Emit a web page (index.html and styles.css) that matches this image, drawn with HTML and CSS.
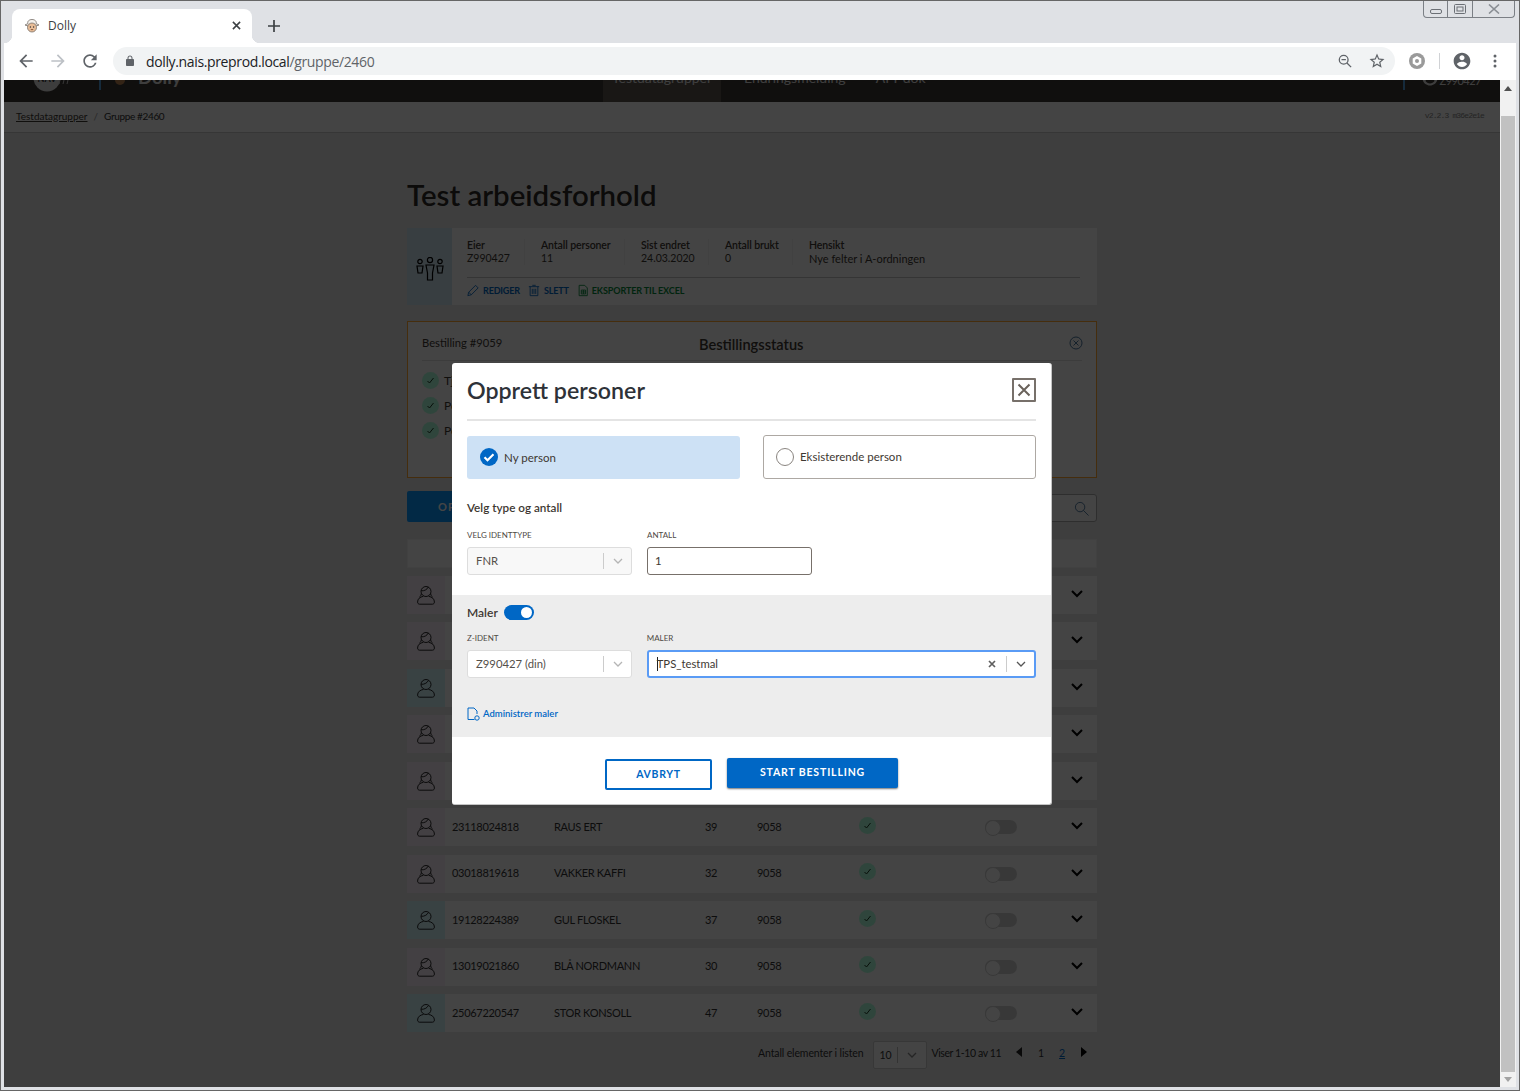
FILE: index.html
```html
<!DOCTYPE html>
<html lang="no">
<head>
<meta charset="utf-8">
<title>Dolly</title>
<link rel="stylesheet" href="styles.css">
</head>
<body>
<svg class="defs" width="0" height="0" aria-hidden="true">
  <symbol id="woman" viewBox="0 0 18 20"><g fill="none" stroke="currentColor" stroke-width=".9"><circle cx="9" cy="6.500" r="5"/><path d="M4.200 5.800c2.800.3 5.800-1 7.200-3.900M4.300 8.500c-.2 1.800-.8 2.800-1.800 3.500M13.700 8.500c.2 1.800.8 2.800 1.800 3.500M6.300 11.300C3 12 .6 13.800.6 17c0 1.300.8 2.200 2 2.200h12.800c1.200 0 2-.9 2-2.200 0-3.200-2.400-5-5.700-5.700"/></g></symbol>
  <symbol id="man" viewBox="0 0 18 20"><g fill="none" stroke="currentColor" stroke-width=".9"><circle cx="9" cy="6.500" r="5"/><path d="M4.200 6.300c2.800.2 5.600-1 7.200-3.700M6.500 11.400C3.200 12 .6 13.800.6 17c0 1.300.8 2.200 2 2.200h12.800c1.200 0 2-.9 2-2.200 0-3.200-2.600-5-5.900-5.600"/></g></symbol>
  <symbol id="ok" viewBox="0 0 17 17"><circle cx="8.500" cy="8.500" r="8.500" fill="#aeffdc"/><path d="M5.500 9l2 2 4-5" fill="none" stroke="#1a3a25" stroke-width="1"/></symbol>
  <symbol id="chev" viewBox="0 0 14 10"><path d="M2 2l5 5 5-5" fill="none" stroke="currentColor" stroke-width="2"/></symbol>
  <symbol id="thin-chev" viewBox="0 0 12 8"><path d="M2 2l4 4 4-4" fill="none" stroke="currentColor" stroke-width="1.300"/></symbol>
</svg>

<div class="window">
  <div class="tabstrip">
    <div class="tab">
      <svg class="favicon" viewBox="0 0 16 16"><path d="M4 5.500C3 3.500 5 1.500 8 1.500s5 2 4 4l3 1.500-3 1H4L1 7z" fill="#f4f1ec" stroke="#77706a" stroke-width=".8"/><circle cx="8" cy="9.500" r="4.500" fill="#e9bd97" stroke="#77706a" stroke-width=".8"/><circle cx="6.400" cy="9" r=".7" fill="#333"/><circle cx="9.600" cy="9" r=".7" fill="#333"/><path d="M6.800 11.600h2.400" stroke="#8b5a3c"/></svg>
      <span class="tab-title">Dolly</span>
      <svg class="tab-close" viewBox="0 0 10 10"><path d="M1 1l8 8M9 1l-8 8" stroke="#3c4043" stroke-width="1.700"/></svg>
    </div>
    <svg class="new-tab" viewBox="0 0 12 12"><path d="M6 0v12M0 6h12" stroke="#3c4043" stroke-width="1.700"/></svg>
    <div class="win-controls">
      <span class="win-btn win-min"><svg viewBox="0 0 12 6" width="12" height="6"><rect x=".5" y=".5" width="11" height="4" rx="1.500" fill="none" stroke="#6b6f75"/></svg></span>
      <span class="win-btn win-max"><svg viewBox="0 0 12 10" width="12" height="10"><rect x=".5" y=".5" width="11" height="9" rx="1" fill="none" stroke="#6b6f75"/><rect x="3" y="3" width="6" height="4" fill="none" stroke="#6b6f75"/></svg></span>
      <span class="win-btn win-close"><svg viewBox="0 0 12 10" width="12" height="10"><path d="M1 .5l10 9M11 .5l-10 9" stroke="#8a8e94" stroke-width="1.600" fill="none"/></svg></span>
    </div>
  </div>

  <div class="toolbar">
    <svg class="tb-icon back" viewBox="0 0 24 24"><path d="M20 11H7.830l5.590-5.590L12 4l-8 8 8 8 1.410-1.410L7.830 13H20v-2z"/></svg>
    <svg class="tb-icon forward" viewBox="0 0 24 24"><path d="M4 11h12.170l-5.590-5.590L12 4l8 8-8 8-1.410-1.410L16.170 13H4v-2z"/></svg>
    <svg class="tb-icon reload" viewBox="0 0 24 24"><path d="M17.650 6.350A7.958 7.958 0 0 0 12 4c-4.420 0-7.990 3.580-7.990 8s3.570 8 7.990 8c3.730 0 6.840-2.550 7.730-6h-2.080A5.990 5.990 0 0 1 12 18c-3.310 0-6-2.690-6-6s2.690-6 6-6c1.660 0 3.140.690 4.220 1.780L13 11h7V4l-2.350 2.350z"/></svg>
    <div class="omnibox">
      <svg class="lock" viewBox="0 0 24 24"><path d="M18 8h-1V6c0-2.760-2.240-5-5-5S7 3.240 7 6v2H6c-1.100 0-2 .9-2 2v10c0 1.100.9 2 2 2h12c1.100 0 2-.9 2-2V10c0-1.100-.9-2-2-2zM9 6c0-1.660 1.340-3 3-3s3 1.340 3 3v2H9V6z"/></svg>
      <span class="url"><span class="url-host">dolly.nais.preprod.local</span>/gruppe/2460</span>
      <svg class="omni-icon zoom-out" viewBox="0 0 16 16"><circle cx="6.500" cy="6.500" r="5" fill="none" stroke="#5f6368" stroke-width="1.500"/><path d="M10.200 10.200L15 15M4 6.500h5" stroke="#5f6368" stroke-width="1.500"/></svg>
      <svg class="omni-icon star" viewBox="0 0 24 24"><path d="M22 9.240l-7.190-.62L12 2 9.190 8.630 2 9.240l5.460 4.730L5.820 21 12 17.270 18.180 21l-1.630-7.030L22 9.240zM12 15.400l-3.760 2.270 1-4.280-3.320-2.880 4.380-.38L12 6.100l1.710 4.040 4.380.38-3.320 2.880 1 4.280L12 15.400z"/></svg>
    </div>
    <svg class="ext" viewBox="0 0 16 16"><circle cx="8" cy="8" r="8" fill="#9a9a9a"/><path d="M8 3l4.300 2.500v5L8 13l-4.300-2.500v-5z" fill="#fff"/><circle cx="8" cy="8" r="2" fill="#9a9a9a"/></svg>
    <span class="tb-sep"></span>
    <svg class="tb-icon profile" viewBox="0 0 24 24"><path d="M12 2C6.480 2 2 6.480 2 12s4.480 10 10 10 10-4.480 10-10S17.520 2 12 2zm0 3c1.660 0 3 1.340 3 3s-1.340 3-3 3-3-1.340-3-3 1.340-3 3-3zm0 14.200c-2.500 0-4.710-1.280-6-3.220.03-1.990 4-3.080 6-3.080 1.990 0 5.970 1.090 6 3.080-1.290 1.940-3.500 3.220-6 3.220z"/></svg>
    <svg class="menu" viewBox="0 0 4 14"><circle cx="2" cy="2" r="1.500"/><circle cx="2" cy="7" r="1.500"/><circle cx="2" cy="12" r="1.500"/></svg>
  </div>

  <div class="viewport">
    <div class="page">
      <div class="page-scroll">
        <header class="nav">
          <div class="nav-left">
            <svg class="nav-logo" viewBox="0 0 38 28"><circle cx="14" cy="14" r="13.500" fill="#e2e2e2"/><text x="14" y="18" class="nav-logo-text">NAV</text><path d="M29 8l-3 12M33 8l-3 12M37 8l-3 12" stroke="#ccc" stroke-width="1"/></svg>
            <span class="nav-sep"></span>
            <svg class="nav-sheep" viewBox="0 0 14 20"><ellipse cx="7" cy="7" rx="6" ry="6" fill="#f2e6d8"/><circle cx="7" cy="12" r="5" fill="#c08552"/></svg>
            <span class="nav-brand">Dolly</span>
          </div>
          <nav class="nav-tabs">
            <a class="nav-tab nav-tab-active">Testdatagrupper</a>
            <a class="nav-tab">Endringsmelding</a>
            <a class="nav-tab">API-dok</a>
          </nav>
          <div class="nav-user">
            <span class="nav-sep nav-sep-user"></span>
            <svg class="nav-user-icon" viewBox="0 0 24 24"><path d="M12 2C6.480 2 2 6.480 2 12s4.480 10 10 10 10-4.480 10-10S17.520 2 12 2zm0 3c1.660 0 3 1.340 3 3s-1.340 3-3 3-3-1.340-3-3 1.340-3 3-3zm0 14.200c-2.500 0-4.710-1.280-6-3.220.03-1.990 4-3.080 6-3.080 1.990 0 5.970 1.090 6 3.080-1.290 1.940-3.500 3.220-6 3.220z"/></svg>
            <span class="nav-user-name">Z990427</span>
          </div>
        </header>

        <div class="crumbs">
          <a class="crumb-link">Testdatagrupper</a>
          <span class="crumb-sep">/</span>
          <span class="crumb-here">Gruppe #2460</span>
          <span class="version">v2.2.3 m36e2e1e</span>
        </div>

        <main class="main">
          <h1 class="title">Test arbeidsforhold</h1>

          <section class="group-card">
            <div class="group-icon">
              <svg viewBox="0 0 30 24" width="30" height="24"><g fill="none" stroke="#000" stroke-width="1.200"><circle cx="5" cy="4.500" r="2.200"/><circle cx="15" cy="3" r="2.600"/><circle cx="25" cy="4.500" r="2.200"/><path d="M2 9h6l-1 7H3zM11 8h8l-1.500 8v7h-5v-7zM22 9h6l-1 7h-4z"/></g></svg>
            </div>
            <div class="group-body">
              <div class="group-info">
                <div class="info-col info-eier"><span>Eier</span><span>Z990427</span></div>
                <div class="info-col info-antall"><span>Antall personer</span><span>11</span></div>
                <div class="info-col info-endret"><span>Sist endret</span><span>24.03.2020</span></div>
                <div class="info-col info-brukt"><span>Antall brukt</span><span>0</span></div>
                <div class="info-col info-hensikt"><span>Hensikt</span><span>Nye felter i A-ordningen</span></div>
              </div>
              <div class="group-actions">
                <a class="action"><svg class="action-icon" viewBox="0 0 14 14"><path d="M1 13l1-4 8-8 3 3-8 8zM2 9l3 3" fill="none" stroke="currentColor"/></svg>REDIGER</a>
                <a class="action"><svg class="action-icon" viewBox="0 0 14 14"><path d="M1 2.500h12M5 1h4M2.500 2.500V13h9V2.500M5 5v6M7 5v6M9 5v6" fill="none" stroke="currentColor"/></svg>SLETT</a>
                <a class="action action-excel"><svg class="action-icon" viewBox="0 0 14 14"><path d="M2.500 1H9l3 3v9H2.500zM5 6.500h5v4.500H5zM7.500 6.500V11M5 8.700h5" fill="none" stroke="currentColor"/></svg>EKSPORTER TIL EXCEL</a>
              </div>
            </div>
          </section>

          <section class="order-box">
            <div class="order-head">
              <span class="order-id">Bestilling #9059</span>
              <span class="order-title">Bestillingsstatus</span>
              <svg class="order-close" viewBox="0 0 14 14"><g fill="none" stroke="#3a6a95" stroke-width=".9"><circle cx="7" cy="7" r="6"/><path d="M4.500 4.500l5 5M9.500 4.500l-5 5"/></g></svg>
            </div>
            <ul class="order-list">
              <li><svg class="check-sm"><use href="#ok"/></svg>Tjenester</li>
              <li><svg class="check-sm"><use href="#ok"/></svg>Personer</li>
              <li><svg class="check-sm"><use href="#ok"/></svg>Personer</li>
            </ul>
          </section>

          <div class="list-tools">
            <button class="create-btn" type="button">OPPRETT PERSONER</button>
            <div class="search">
              <svg class="search-icon" viewBox="0 0 16 16"><circle cx="6.500" cy="6.500" r="5" fill="none" stroke="#3a6a95" stroke-width=".9"/><path d="M10 10l5.500 5.500" stroke="#3a6a95" stroke-width=".9"/></svg>
            </div>
          </div>

          <div class="table">
            <div class="thead"></div>
            <div class="row"><span class="r-icon r-w"><svg class="person"><use href="#woman"/></svg></span><svg class="chev"><use href="#chev"/></svg></div>
            <div class="row"><span class="r-icon r-w"><svg class="person"><use href="#woman"/></svg></span><svg class="chev"><use href="#chev"/></svg></div>
            <div class="row"><span class="r-icon r-m"><svg class="person"><use href="#man"/></svg></span><svg class="chev"><use href="#chev"/></svg></div>
            <div class="row"><span class="r-icon r-w"><svg class="person"><use href="#woman"/></svg></span><svg class="chev"><use href="#chev"/></svg></div>
            <div class="row"><span class="r-icon r-w"><svg class="person"><use href="#woman"/></svg></span><svg class="chev"><use href="#chev"/></svg></div>
            <div class="row"><span class="r-icon r-w"><svg class="person"><use href="#woman"/></svg></span><span class="cell">23118024818</span><span class="cell">RAUS ERT</span><span class="cell">39</span><span class="cell">9058</span><svg class="check"><use href="#ok"/></svg><span class="off-toggle"></span><svg class="chev"><use href="#chev"/></svg></div>
            <div class="row"><span class="r-icon r-w"><svg class="person"><use href="#woman"/></svg></span><span class="cell">03018819618</span><span class="cell">VAKKER KAFFI</span><span class="cell">32</span><span class="cell">9058</span><svg class="check"><use href="#ok"/></svg><span class="off-toggle"></span><svg class="chev"><use href="#chev"/></svg></div>
            <div class="row"><span class="r-icon r-m"><svg class="person"><use href="#man"/></svg></span><span class="cell">19128224389</span><span class="cell">GUL FLOSKEL</span><span class="cell">37</span><span class="cell">9058</span><svg class="check"><use href="#ok"/></svg><span class="off-toggle"></span><svg class="chev"><use href="#chev"/></svg></div>
            <div class="row"><span class="r-icon r-w"><svg class="person"><use href="#woman"/></svg></span><span class="cell">13019021860</span><span class="cell">BLÅ NORDMANN</span><span class="cell">30</span><span class="cell">9058</span><svg class="check"><use href="#ok"/></svg><span class="off-toggle"></span><svg class="chev"><use href="#chev"/></svg></div>
            <div class="row"><span class="r-icon r-m"><svg class="person"><use href="#man"/></svg></span><span class="cell">25067220547</span><span class="cell">STOR KONSOLL</span><span class="cell">47</span><span class="cell">9058</span><svg class="check"><use href="#ok"/></svg><span class="off-toggle"></span><svg class="chev"><use href="#chev"/></svg></div>
          </div>

          <div class="pager">
            <span>Antall elementer i listen</span>
            <span class="pager-select"><span>10</span><i class="pager-bar"></i><svg class="pager-chev"><use href="#thin-chev"/></svg></span>
            <span class="pager-range">Viser 1-10 av 11</span>
            <span class="tri tri-left"></span>
            <span class="page-no">1</span>
            <a class="page-no page-link">2</a>
            <span class="tri tri-right"></span>
          </div>
        </main>
      </div>

      <div class="overlay">
        <div class="modal">
          <div class="modal-top">
            <div class="modal-head">
              <h2 class="modal-title">Opprett personer</h2>
              <button class="modal-close" type="button" aria-label="Lukk"><svg viewBox="0 0 14 14" width="14" height="14"><path d="M1.500 1.500l11 11M12.500 1.500l-11 11" stroke="#6a625b" stroke-width="2"/></svg></button>
            </div>
            <div class="radio-row">
              <div class="radio-card radio-on">
                <svg class="radio-mark" viewBox="0 0 18 18"><circle cx="9" cy="9" r="9" fill="#0067c5"/><path d="M4.500 9.200l3 3 6-6" fill="none" stroke="#fff" stroke-width="2.200"/></svg>
                <span>Ny person</span>
              </div>
              <div class="radio-card radio-off">
                <span class="radio-empty"></span>
                <span>Eksisterende person</span>
              </div>
            </div>
            <h3 class="sub">Velg type og antall</h3>
            <div class="fields">
              <div class="field">
                <label class="field-label">VELG IDENTTYPE</label>
                <div class="select select-disabled"><span class="select-value">FNR</span><i class="select-bar"></i><svg class="select-chev"><use href="#thin-chev"/></svg></div>
              </div>
              <div class="field">
                <label class="field-label">ANTALL</label>
                <div class="text-input">1</div>
              </div>
            </div>
          </div>

          <div class="modal-mid">
            <div class="maler-head"><span class="sub-inline">Maler</span><span class="on-toggle"></span></div>
            <div class="fields">
              <div class="field">
                <label class="field-label">Z-IDENT</label>
                <div class="select"><span class="select-value">Z990427 (din)</span><i class="select-bar"></i><svg class="select-chev"><use href="#thin-chev"/></svg></div>
              </div>
              <div class="field field-wide">
                <label class="field-label">MALER</label>
                <div class="select select-focus"><span class="caret"></span><span class="select-value">TPS_testmal</span><svg class="clear" viewBox="0 0 8 8"><path d="M1 1l6 6M7 1L1 7" stroke="#5f5f5f" stroke-width="1.700"/></svg><i class="select-bar"></i><svg class="select-chev select-chev-dark"><use href="#thin-chev"/></svg></div>
              </div>
            </div>
            <a class="admin-link"><svg class="admin-icon" viewBox="0 0 13 14"><path d="M7.500 12.500H1V1h6l3 3v3" fill="none" stroke="#0067c5"/><circle cx="10" cy="11" r="2.200" fill="none" stroke="#0067c5"/></svg>Administrer maler</a>
          </div>

          <div class="modal-foot">
            <button class="btn btn-ghost" type="button">AVBRYT</button>
            <button class="btn btn-main" type="button">START BESTILLING</button>
          </div>
        </div>
      </div>
    </div>

    <div class="scrollbar">
      <span class="sb-arrow sb-up"></span>
      <span class="sb-thumb"></span>
      <span class="sb-arrow sb-down"></span>
    </div>
  </div>
</div>
</body>
</html>
```

FILE: styles.css
```css
* { box-sizing: border-box; }
html, body { margin: 0; padding: 0; }
body { font-family: "Lato", "Noto Sans", sans-serif; color: #3e3832; overflow: hidden; }
ul { margin: 0; padding: 0; list-style: none; }
h1, h2, h3 { margin: 0; }
button { font-family: inherit; cursor: pointer; }
.defs { position: absolute; }

.window {
  width: 1520px; height: 1091px; display: flex; flex-direction: column;
  background: #dfe1e5; border: 1px solid #666;
  padding: 0 3px 3px;
}

/* browser chrome */
.tabstrip { height: 42px; flex: none; display: flex; align-items: flex-end; position: relative; }
.tab {
  width: 240px; height: 34px; margin-left: 8px; background: #fff; border-radius: 8px 8px 0 0;
  display: flex; align-items: center; padding: 0 11px 1px 12px; position: relative;
}
.tab::before, .tab::after { content: ""; position: absolute; bottom: 0; width: 8px; height: 8px; }
.tab::before { left: -8px; background: radial-gradient(circle at 0 0, transparent 8px, #fff 8.500px); }
.tab::after { right: -8px; background: radial-gradient(circle at 100% 0, transparent 8px, #fff 8.500px); }
.favicon { width: 16px; height: 16px; }
.tab-title { margin-left: 8px; font: 12px "Open Sans", sans-serif; color: #3c4043; flex: 1; }
.tab-close { width: 9px; height: 9px; }
.new-tab { width: 12px; height: 12px; margin: 0 0 11px 16px; }
.win-controls {
  position: absolute; top: 0; right: 1px; display: flex; height: 17px;
  border: 1px solid #7b7f85; border-top: 0; border-radius: 0 0 4px 4px;
}
.win-btn { display: flex; align-items: center; justify-content: center; border-right: 1px solid #7b7f85; }
.win-min { width: 24px; padding-top: 5px; }
.win-max { width: 25px; }
.win-close { width: 41px; border-right: 0; }

.toolbar { height: 37px; flex: none; background: #fff; display: flex; align-items: center; position: relative; padding: 0 0 1px 12px; }
.tb-icon { width: 20px; height: 20px; fill: #5f6368; flex: none; }
.forward { fill: #bdc1c6; margin-left: 12px; }
.reload { margin-left: 12px; }
.omnibox {
  width: 1282px; height: 28px; margin-left: 13px; background: #f1f3f4; border-radius: 14px;
  display: flex; align-items: center; padding-left: 11px; flex: none;
}
.lock { width: 12px; height: 12px; fill: #5f6368; }
.url { margin-left: 10px; font: 14px "Open Sans", sans-serif; letter-spacing: -.36px; color: #5f6368; flex: 1; }
.url-host { color: #202124; }
.omni-icon { flex: none; }
.zoom-out { width: 14px; height: 14px; margin-right: 16px; }
.star { width: 18px; height: 18px; fill: #5f6368; margin-right: 9px; }
.ext { width: 16px; height: 16px; margin-left: 14px; flex: none; }
.tb-sep { width: 1px; height: 16px; background: #d0d2d5; margin-left: 14px; flex: none; }
.profile { margin-left: 12px; }
.menu { width: 4px; height: 14px; fill: #5f6368; margin-left: 21px; flex: none; }

/* viewport */
.viewport { flex: 1; min-height: 0; display: flex; }
.page { flex: 1; min-width: 0; position: relative; overflow: hidden; background: #e6e6e6; }
.page-scroll { margin-top: -38px; }
.scrollbar {
  width: 16px; flex: none; background: #f1f1f1; display: flex; flex-direction: column; align-items: center; padding: 6px 0 5px;
}
.sb-arrow { width: 0; height: 0; border-left: 4px solid transparent; border-right: 4px solid transparent; flex: none; }
.sb-up { border-bottom: 5px solid #505050; }
.sb-down { border-top: 5px solid #a3a3a3; }
.sb-thumb { width: 14px; flex: 1; background: #c1c1c1; margin: 25px 0 5px; }

/* dimmed app */
.nav { height: 60px; background: #3e3935; color: #e6e6e6; display: flex; padding-top: 22px; font-size: 14px; }
.nav-left { width: 599px; display: flex; align-items: flex-start; padding-left: 29px; flex: none; }
.nav-logo { width: 38px; height: 28px; flex: none; }
.nav-logo-text { font-size: 9px; font-weight: 700; text-anchor: middle; fill: #333; }
.nav-sep { width: 2px; height: 28px; background: #52a0dc; flex: none; margin-left: 28px; margin-top: -2px; }
.nav-sheep { width: 14px; height: 20px; margin: 4px 0 0 12px; flex: none; }
.nav-brand { font-size: 18.500px; font-weight: 700; margin: -2px 0 0 11px; line-height: 30px; }
.nav-tabs { display: flex; margin-top: -22px; }
.nav-tab { padding: 22px 9px 0; width: 118px; height: 60px; line-height: 28px; white-space: nowrap; }
.nav-tab-active { background: #5d5650; }
.nav-tab:nth-child(2) { width: auto; padding: 22px 0 0; margin-left: 23px; }
.nav-tab:nth-child(3) { width: auto; padding: 22px 0 0; margin-left: 30px; }
.nav-user { margin-left: auto; padding-right: 19px; display: flex; align-items: flex-start; font-size: 11px; letter-spacing: -.5px; }
.nav-sep-user { margin: -2px 16px 0 0; }
.nav-user-icon { width: 18px; height: 18px; fill: #e6e6e6; margin: 5px 1px 0 0; }
.nav-user-name { line-height: 34px; }

.crumbs {
  height: 31px; background: #f9f9f9; border-bottom: 1px solid #c8c8c8; display: flex; align-items: center;
  padding: 0 16px 3px 12px; font-size: 10px; color: #333;
}
.crumb-link { text-decoration: underline; color: #3e3832; }
.crumb-sep { margin: 0 6px; color: #999; }
.crumb-here { letter-spacing: -.35px; }
.version { margin-left: auto; font-family: "Liberation Mono", monospace; font-size: 8px; letter-spacing: -.85px; color: #888; }

.main { width: 690px; margin: 0 auto; padding-top: 45px; }
.title { font-size: 29.400px; font-weight: 600; line-height: 34px; color: #2e2b28; }

.group-card { margin-top: 16px; height: 77px; background: #f9f9f9; display: flex; }
.group-icon { width: 45px; background: #cde3ee; display: flex; align-items: center; justify-content: center; padding-top: 4px; flex: none; }
.group-body { flex: 1; padding: 11px 17px 0 15px; min-width: 0; }
.group-info { display: flex; gap: 16px; height: 39px; border-bottom: 1px solid #c4c4c4; }
.info-col { display: flex; flex-direction: column; height: 26px; font-size: 10.500px; line-height: 13px; border-right: 1px solid #eee; color: #3e3832; white-space: nowrap; }
.info-col span:first-child { font-weight: 600; letter-spacing: -.1px; }
.info-eier { width: 58px; }
.info-antall { width: 84px; }
.info-endret { width: 68px; }
.info-brukt { width: 68px; }
.info-hensikt { border-right: 0; }
.info-hensikt span:last-child { font-size: 11px; }
.group-actions { display: flex; gap: 8px; padding-top: 6px; }
.action { display: flex; align-items: center; gap: 4px; font-size: 9px; font-weight: 700; letter-spacing: -.15px; color: #0067c5; line-height: 13px; white-space: nowrap; }
.action-excel { color: #06893a; gap: 3px; letter-spacing: -.1px; }
.action-icon { width: 12px; height: 13px; }

.order-box { margin-top: 16px; height: 157px; border: 1px solid #ffa733; background: #f9f9f9; padding: 0 14px; }
.order-head { height: 39px; display: flex; position: relative; border-bottom: 1px solid #ddd; }
.order-id { font-size: 11.200px; line-height: 13px; margin-top: 14px; }
.order-title { font-size: 14.600px; font-weight: 600; position: absolute; left: 277px; top: 14px; line-height: 18px; }
.order-close { width: 14px; height: 14px; margin-left: auto; margin-top: 14px; margin-right: -1px; }
.order-list { padding-top: 7px; }
.order-list li { display: flex; align-items: center; height: 25px; gap: 5px; font-size: 12px; }
.check-sm { width: 17px; height: 17px; flex: none; }

.list-tools { margin-top: 13px; height: 31px; display: flex; justify-content: space-between; }
.create-btn { width: 200px; height: 31px; background: #0a96ff; border: 0; border-radius: 2px; color: #fff; font-weight: 700; font-size: 11px; letter-spacing: 1px; text-align: left; padding: 0 0 0 31px; }
.search { width: 150px; height: 28px; margin-top: 3px; border: 1px solid #aaa; border-radius: 3px; background: #f9f9f9; display: flex; justify-content: flex-end; align-items: center; padding-right: 7px; }
.search-icon { width: 15px; height: 15px; }

.table { margin-top: 17px; }
.thead { height: 29px; background: #f9f9f9; border: 1px solid #f0f0f0; margin-bottom: 7.500px; }
.row {
  height: 38px; margin-bottom: 8.500px; background: #f9f9f9; display: grid;
  grid-template-columns: 45px 102px 151px 52px 102px 126px 60px 1fr; align-items: center;
  font-size: 11px; letter-spacing: -.3px; color: #333;
}
.cell { margin-top: -2px; }
.r-icon { width: 38px; height: 38px; display: flex; align-items: center; justify-content: center; }
.r-w { background: #f7edf7; }
.r-m { background: #d4f2f8; }
.person { width: 18px; height: 20px; color: #111; }
.check { width: 17px; height: 17px; margin-top: -4px; }
.off-toggle { width: 32px; height: 14px; border-radius: 7px; background: #d0d0d0; position: relative; }
.off-toggle::before { content: ""; position: absolute; left: 0; top: 0; width: 14px; height: 14px; border-radius: 50%; background: #fbfbfb; border: 1px solid #d0d0d0; }
.row .chev { grid-column: 8; width: 14px; height: 10px; margin-left: 25px; color: #000; margin-top: -2px; }

.pager { height: 28px; display: flex; align-items: flex-start; font-size: 10.500px; letter-spacing: -.12px; line-height: 24px; padding-left: 351px; color: #333; white-space: nowrap; }
.pager-select { width: 54px; height: 28px; margin: 0 5px 0 9px; background: #f9f9f9; border: 1px solid #ccc; border-radius: 2px; display: flex; align-items: center; padding-left: 6px; }
.pager-bar { width: 1px; height: 16px; background: #bbb; margin-left: 6px; }
.pager-chev { width: 12px; height: 8px; margin-left: 8px; color: #888; }
.pager-range { letter-spacing: -.4px; }
.tri { width: 0; height: 0; margin-top: 6px; border-top: 5px solid transparent; border-bottom: 5px solid transparent; }
.tri-left { border-right: 6px solid #222; margin-left: 15px; }
.tri-right { border-left: 6px solid #000; margin-left: 16px; }
.page-no { margin-left: 16px; }
.page-link { margin-left: 15px; color: #0067c5; text-decoration: underline; }

/* modal */
.overlay { position: absolute; inset: 0; background: rgba(0, 0, 0, .73); display: flex; align-items: center; justify-content: center; }
.modal { width: 600px; height: 442px; background: #fff; border-radius: 3px; display: flex; flex-direction: column; overflow: hidden; border-right: 1px solid #c4c4c4; border-bottom: 1px solid #c4c4c4; }
.modal-top { height: 232px; padding: 0 15px; flex: none; }
.modal-head { height: 58px; border-bottom: 2px solid #e4e4e4; display: flex; align-items: flex-start; justify-content: space-between; }
.modal-title { font-size: 23.200px; font-weight: 600; color: #2e3238; line-height: 30px; margin-top: 12px; }
.modal-close { width: 24px; height: 24px; margin-top: 15px; padding: 0; background: #fff; border: 2px solid #77706a; border-radius: 1px; display: flex; align-items: center; justify-content: center; }
.radio-row { display: flex; justify-content: space-between; align-items: flex-end; margin-top: 15px; height: 43px; }
.radio-card { width: 273px; height: 43px; display: flex; align-items: center; padding-left: 13px; gap: 6px; font-size: 11.500px; border-radius: 3px; color: #3e3832; flex: none; }
.radio-on { background: #cde1f5; }
.radio-off { height: 44px; border: 1px solid #ada8a3; padding-left: 12px; }
.radio-mark { width: 18px; height: 18px; }
.radio-empty { width: 18px; height: 18px; border: 1px solid #8a8580; border-radius: 50%; }
.sub { font-size: 11.700px; font-weight: 600; line-height: 16px; margin-top: 20px; color: #3e3832; }
.fields { display: flex; gap: 15px; }
.modal-top .fields { margin-top: 14px; }
.field { width: 165px; }
.field-wide { width: 390px; }
.field-label { display: block; font-size: 8px; line-height: 12px; color: #4f4a45; margin-bottom: 6px; }
.select, .text-input { height: 28px; border-radius: 3px; font-size: 11.300px; display: flex; align-items: center; padding-left: 8px; color: #3e3832; }
.select { background: #fff; border: 1px solid #ddd; padding-right: 7px; }
.select-disabled { background: #f8f8f8; }
.select-value { flex: 1; color: #55504b; }
.select-bar { width: 1px; height: 16px; background: #ccc; }
.select-chev { width: 12px; height: 8px; margin-left: 8px; color: #b5b5b5; flex: none; }
.select-chev-dark { color: #555; }
.text-input { border: 1px solid #77706a; padding-left: 7px; }
.select-focus { border: 2px solid #5a9bf5; }
.select-focus .select-value { color: #3e3832; margin-left: -1px; }
.caret { width: 1px; height: 14px; background: #222; }
.clear { width: 8px; height: 8px; margin-right: 10px; flex: none; }
.modal-mid { height: 142px; background: #ededed; padding: 10px 15px 0; flex: none; }
.maler-head { display: flex; align-items: center; gap: 6px; height: 16px; margin-bottom: 11px; }
.sub-inline { font-size: 12px; font-weight: 600; color: #3e3832; }
.on-toggle { width: 30px; height: 15px; border-radius: 8px; background: #0067c5; position: relative; }
.on-toggle::after { content: ""; position: absolute; right: 2px; top: 2px; width: 11px; height: 11px; border-radius: 50%; background: #fff; }
.admin-link { display: flex; align-items: center; gap: 3px; margin-top: 29px; font-size: 9.500px; font-weight: 600; color: #0067c5; line-height: 14px; }
.admin-icon { width: 13px; height: 14px; flex: none; }
.modal-foot { flex: 1; display: flex; justify-content: center; gap: 15px; padding-top: 21px; align-items: flex-start; }
.btn { font-size: 10.500px; font-weight: 700; letter-spacing: .7px; border-radius: 2px; padding: 0; }
.btn-ghost { width: 107px; height: 31px; margin-top: 1px; background: #fff; color: #0067c5; border: 2px solid #0067c5; }
.btn-main { width: 171px; height: 30px; background: #0067c5; color: #fff; border: 0; box-shadow: 0 1px 2px #777; letter-spacing: .85px; padding-bottom: 2px; }
```
